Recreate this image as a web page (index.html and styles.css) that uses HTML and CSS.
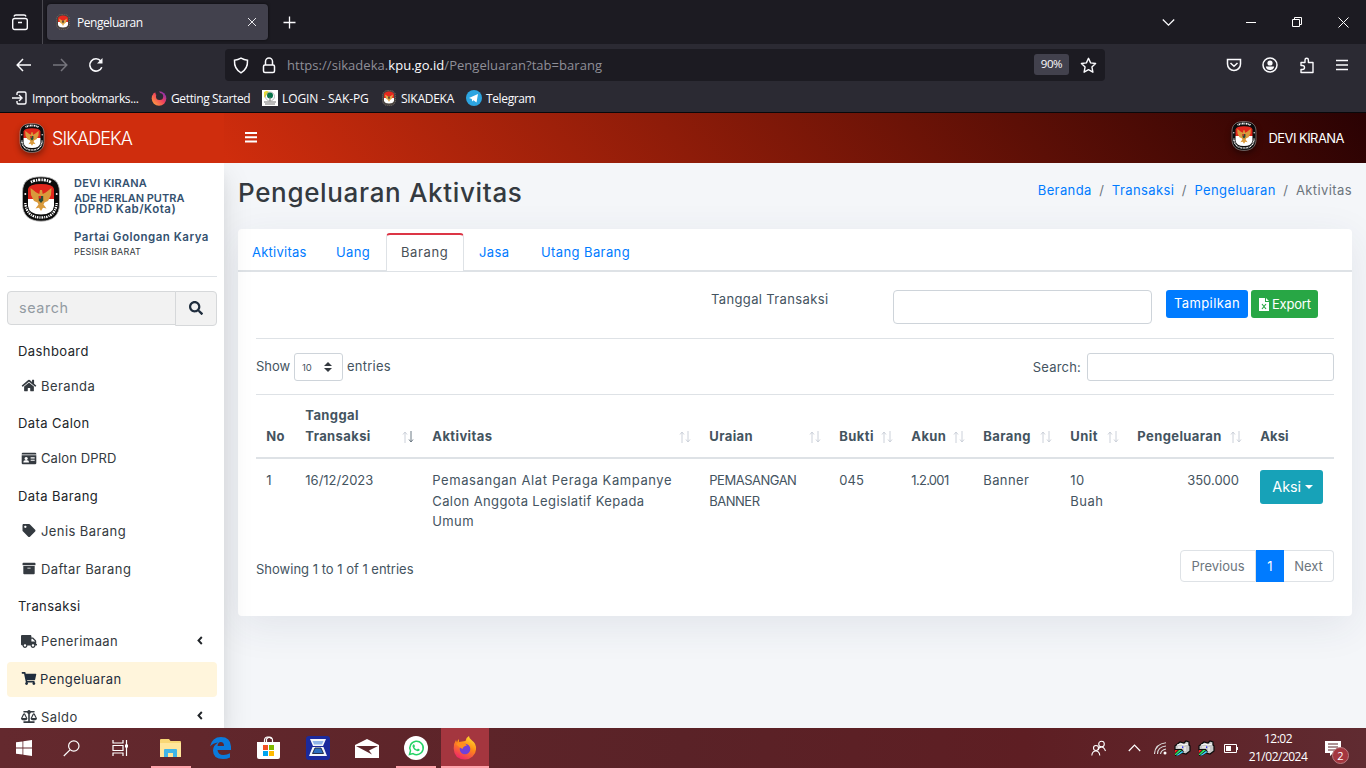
FILE: index.html
```html
<!DOCTYPE html>
<html lang="id">
<head>
<meta charset="utf-8">
<title>Pengeluaran</title>
<link rel="stylesheet" href="styles.css">
</head>
<body>
<svg class="defs" aria-hidden="true">
  <defs>
    <linearGradient id="fox" x1="0.8" y1="0" x2="0.3" y2="1"><stop offset="0" stop-color="#ffe033"/><stop offset=".45" stop-color="#ff8b16"/><stop offset="1" stop-color="#f0246a"/></linearGradient>
    <linearGradient id="swirl" x1="1" y1="0" x2="0" y2="1"><stop offset="0" stop-color="#5b2bd0"/><stop offset=".45" stop-color="#f0405c"/><stop offset="1" stop-color="#ffb03a"/></linearGradient>
  </defs>
  <symbol id="kpu" viewBox="0 0 40 46">
    <path d="M20 .8C32 .8 38.500 5 38.500 16V28C38.500 39 32 45.200 20 45.200S1.500 39 1.500 28V16C1.500 5 8 .8 20 .8z" fill="#0b0b0b" stroke="#bdbdbd" stroke-width=".8"/>
    <path d="M7 23V13Q8 8 20 8T33 13V23Z" fill="#e0261c"/>
    <path d="M7 23H33V30Q32 38.500 20 38.500T7 30Z" fill="#fff"/>
    <path d="M19 14l2 0 .7 4 3-1.500 5.800-4.500-.5 7-3 6-3.500 1.500-1 2 3 4-3.500-.8L20 35l-2-3.300-3.500.8 3-4-1-2-3.500-1.500-3-6-.5-7 5.800 4.500 3 1.500z" fill="#d99a3c"/>
    <path d="M17.800 20h4.400v4.500L20 27l-2.200-2.500z" fill="#2c4b38"/><path d="M17.800 20H20v2.500h-2.200z" fill="#d22"/>
    <path d="M10 6.200Q14 3.800 20 3.800T30 6.200" fill="none" stroke="#fff" stroke-width="2.800" stroke-dasharray="1.300 .9 2.200 1"/>
    <path d="M4.300 27Q5.500 41.500 20 41.500T35.700 27" fill="none" stroke="#fff" stroke-width="2.400" stroke-dasharray="1 .9 1.600 1"/>
    <circle cx="4.300" cy="18" r="1" fill="#fff"/><circle cx="35.700" cy="18" r="1" fill="#fff"/>
  </symbol>
  <symbol id="favicon" viewBox="0 0 14 16">
    <rect x=".3" y=".3" width="13.400" height="15.400" rx="5.500" fill="#4a4440" stroke="#8a8683" stroke-width=".6" stroke-dasharray="1 1"/>
    <path d="M2 8V4q1-2.500 5-2.500T12 4v4z" fill="#e5281e"/><path d="M2 8h10v3q-1 2.500-5 2.500T2 11z" fill="#fff"/>
    <path d="M3 4.500l3 2h2l3-2-1 4-2 1.500-1 2-1-2L4 8.500z" fill="#e0a848"/><path d="M6.300 6.500h1.400v2.300H6.300z" fill="#33302c"/>
  </symbol>
  <symbol id="sort" viewBox="0 0 12 14"><path d="M3 13V2M1 4.500L3 2l2 2.500" fill="none" stroke="#ccd1da"/><path d="M9 1v11M7 9.500L9 12l2-2.500" fill="none" stroke="var(--down,#ccd1da)"/></symbol>
  <symbol id="angle" viewBox="0 0 6 9"><path d="M4.800 1L1.500 4.500 4.800 8" fill="none" stroke="#212529" stroke-width="1.900"/></symbol>
  <symbol id="scanner" viewBox="0 0 17 17"><path d="M1 6l5-4 4 1 2-2 3 1v3l1 1v5l-4 3-8-2-3-2z" fill="#c8c8c8" stroke="#0c0c0c" stroke-width="1.200"/><path d="M3 5l4-1 3 1 4-1M4 7h5M11 7v4" stroke="#fff" fill="none"/><path d="M1 9h7l2 3-6 4H1z" fill="#0c0c0c"/><path d="M1 10h3l-3 3z" fill="#ff2020"/><path d="M5 10h3l-6 5H1v-1z" fill="#30e060"/><path d="M8 11l1.500 1L4 15.500H2z" fill="#40d0ff"/><path d="M8 6.500h1.200v1.200H8z" fill="#00f"/></symbol>
</svg>

<div class="tabstrip">
  <div class="tabview"><svg width="18" height="18" viewBox="0 0 18 18" fill="none" stroke="#fbfbfe" stroke-width="1.400"><rect x="1.700" y="5.500" width="14.600" height="11" rx="2"/><path d="M3 3.500Q3.300 2 5 2h8q1.700 0 2 1.500M7 9.500h4"/></svg></div>
  <div class="tab"><svg width="14" height="16"><use href="#favicon"/></svg><span>Pengeluaran</span><svg width="10" height="10" stroke="#e8e8ec" viewBox="0 0 10 10"><path d="M1 1l8 8M9 1L1 9"/></svg></div>
  <svg class="newtab" width="13" height="13" stroke="#fbfbfe" stroke-width="1.300"><path d="M6.500 .5v12M.5 6.500h12"/></svg>
  <div class="winbtns">
    <svg width="13" height="13" fill="none" stroke="#fbfbfe" stroke-width="1.300"><path d="M.8 3.500l5.700 5.700 5.700-5.700"/></svg>
    <svg width="11" height="11"><path d="M0 5.500h10" stroke="#fff"/></svg>
    <svg width="11" height="11" fill="none" stroke="#fff"><path d="M.5 2.500h7v7h-7zM2.500 2.500v-2h7v7h-2"/></svg>
    <svg width="11" height="11" stroke="#fff"><path d="M.5.5l10 10M10.500.5l-10 10"/></svg>
  </div>
</div>

<div class="toolbar">
  <div class="navbtns">
    <svg width="16" height="14" fill="none" stroke="#fbfbfe" stroke-width="1.500"><path d="M15 7H1.500M7 1L1.200 7 7 13"/></svg>
    <svg width="16" height="14" fill="none" stroke="#76757d" stroke-width="1.500"><path d="M1 7h13.500M9 1l5.800 6L9 13"/></svg>
    <svg width="16" height="16" fill="none" stroke="#fbfbfe" stroke-width="1.600"><path d="M13.800 10.200A6.200 6.200 0 1 1 12.800 4"/><path d="M14.500 1v5.500H9z" fill="#fbfbfe" stroke="none"/></svg>
  </div>
  <div class="urlbar">
    <svg width="16" height="17" fill="none" stroke="#fbfbfe" stroke-width="1.500"><path d="M8 1.200Q11 3 14.500 3.300Q15 12 8 15.800Q1 12 1.500 3.300Q5 3 8 1.200z"/></svg>
    <svg class="lock" width="14" height="17" fill="none" stroke="#fbfbfe" stroke-width="1.500"><rect x="1.500" y="8" width="11" height="7.500" rx="1.500"/><path d="M3.500 8V4.500a3.500 3.500 0 0 1 7 0V8"/></svg>
    <div class="url">https://sikadeka.<b>kpu.go.id</b>/Pengeluaran?tab=barang</div>
    <div class="zoom">90%</div>
    <svg width="17" height="17" fill="none" stroke="#fbfbfe" stroke-width="1.400" stroke-linejoin="round"><path d="M8.500 1.300l2.100 4.600 5 .6-3.700 3.400 1 5.300-4.400-2.600-4.400 2.600 1-5.300L1.400 6.500l5-.6z"/></svg>
  </div>
  <div class="tools">
    <svg width="16" height="16" fill="none" stroke="#fbfbfe" stroke-width="1.500"><path d="M1.500 2.500h13V7a6.500 6.500 0 0 1-13 0zM4.500 6L8 9.200 11.500 6"/></svg>
    <svg width="16" height="16"><circle cx="8" cy="8" r="7" fill="none" stroke="#fbfbfe" stroke-width="1.500"/><circle cx="8" cy="6" r="2.600" fill="#fbfbfe"/><path d="M3.800 9.500h8.400q-.6 3.500-4.200 3.500t-4.200-3.500z" fill="#fbfbfe"/></svg>
    <svg width="16" height="17" fill="none" stroke="#fbfbfe" stroke-width="1.400" stroke-linejoin="round"><path d="M2 5.500h4V3a1.700 1.700 0 0 1 3.400 0v2.500H14V15.500H2V12.500h1.500a2 2 0 0 0 0-4H2z"/></svg>
    <svg width="14" height="12" stroke="#fbfbfe" stroke-width="1.300"><path d="M1 1.500h12M1 6h12M1 10.500h12"/></svg>
  </div>
</div>

<div class="bookmarks">
  <span class="bm b1"><svg width="16" height="14" fill="none" stroke="#fbfbfe" stroke-width="1.400"><path d="M5 4V2.500Q5 1 6.500 1h6Q14 1 14 2.500v9q0 1.500-1.500 1.500h-6Q5 13 5 11.500V10M0 7h9M7 4l3 3-3 3"/></svg>Import bookmarks...</span>
  <span class="bm b2"><svg width="16" height="16"><circle cx="8" cy="8.500" r="7.300" fill="url(#swirl)"/><circle cx="8.600" cy="6.500" r="3.600" fill="#2b2a33"/><path d="M4 1.500Q8-1 9 3L5 5z" fill="#2b2a33"/></svg>Getting Started</span>
  <span class="bm b3"><svg width="16" height="16"><rect width="16" height="16" fill="#fff"/><path d="M2 2q3-2 5 0L2 8z" fill="#e9dc36"/><circle cx="8" cy="6.500" r="4.500" fill="none" stroke="#999" stroke-width=".7"/><circle cx="8" cy="5.500" r="3" fill="#08744a"/><path d="M8 7v4M2 12h12M3 14h10" stroke="#777"/></svg>LOGIN - SAK-PG</span>
  <span class="bm b4"><svg width="14" height="16"><use href="#favicon"/></svg>SIKADEKA</span>
  <span class="bm b5"><svg width="16" height="16"><circle cx="8" cy="8" r="8" fill="#2da5e1"/><path d="M3 8l9-4-1.500 8.500-3-2.200-1.300 1.200-.4-2.500z" fill="#fff"/></svg>Telegram</span>
</div>

<div class="app">
  <header class="header">
    <div class="brand"><svg width="26" height="30"><use href="#kpu"/></svg><span>SIKADEKA</span></div>
    <svg class="bars" width="12" height="11" fill="#fff"><path d="M0 0h12v2H0zM0 4.200h12v2H0zM0 8.500h12v2H0z"/></svg>
    <div class="user"><svg width="26" height="30"><use href="#kpu"/></svg><span>DEVI KIRANA</span></div>
  </header>
  <div class="body">
    <aside class="sidebar">
      <div class="profile">
        <svg width="40" height="46"><use href="#kpu"/></svg>
        <div class="who">
          <b class="n1">DEVI KIRANA</b><b class="n2">ADE HERLAN PUTRA</b><b class="n3">(DPRD Kab/Kota)</b><b class="n4">Partai Golongan Karya</b><span>PESISIR BARAT</span>
        </div>
      </div>
      <div class="find"><div class="find-in">search</div><div class="find-btn"><svg width="14" height="14" viewBox="0 0 512 512"><path d="M505 442.700L405.300 343c-4.500-4.500-10.600-7-17-7H372c27.600-35.300 44-79.700 44-128C416 93.100 322.900 0 208 0S0 93.100 0 208s93.100 208 208 208c48.300 0 92.700-16.400 128-44v16.300c0 6.400 2.500 12.500 7 17l99.700 99.700c9.400 9.400 24.600 9.400 33.900 0l28.300-28.300c9.400-9.400 9.400-24.600.1-34zM208 336c-70.700 0-128-57.200-128-128 0-70.700 57.200-128 128-128 70.700 0 128 57.200 128 128 0 70.700-57.200 128-128 128z"/></svg></div></div>
      <nav class="menu">
        <div class="cap">Dashboard</div>
        <div class="item"><svg viewBox="0 0 576 512"><path d="M280.370 148.260L96 300.110V464a16 16 0 0 0 16 16l112.060-.29a16 16 0 0 0 15.920-16V368a16 16 0 0 1 16-16h64a16 16 0 0 1 16 16v95.640a16 16 0 0 0 16 16.050L464 480a16 16 0 0 0 16-16V300L295.670 148.260a12.190 12.190 0 0 0-15.300 0zM571.600 251.470L488 182.560V44.050a12 12 0 0 0-12-12h-56a12 12 0 0 0-12 12v72.610L318.470 43a48 48 0 0 0-61 0L4.340 251.470a12 12 0 0 0-1.600 16.900l25.500 31A12 12 0 0 0 45.150 301l235.220-193.740a12.190 12.190 0 0 1 15.300 0L530.900 301a12 12 0 0 0 16.900-1.600l25.500-31a12 12 0 0 0-1.700-16.930z"/></svg><span>Beranda</span></div>
        <div class="cap">Data Calon</div>
        <div class="item"><svg viewBox="0 0 576 512"><path fill-rule="evenodd" d="M48 32h480q48 0 48 48v16H0V80q0-48 48-48zM0 128h576v304q0 48-48 48H48q-48 0-48-48zm176 64a64 64 0 1 0 .1 0zM64 400q0 16 16 16h192q16 0 16-16 0-80-70-80h-84q-70 0-70 80zM352 192v32h160v-32zm0 64v32h160v-32zm0 64v32h160v-32z"/></svg><span class="tight">Calon DPRD</span></div>
        <div class="cap">Data Barang</div>
        <div class="item"><svg viewBox="0 0 512 512"><path d="M0 252.118V48C0 21.490 21.490 0 48 0h204.118a48 48 0 0 1 33.941 14.059l211.882 211.882c18.745 18.745 18.745 49.137 0 67.882L293.823 497.941c-18.745 18.745-49.137 18.745-67.882 0L14.059 286.059A48 48 0 0 1 0 252.118zM112 64c-26.510 0-48 21.490-48 48s21.490 48 48 48 48-21.490 48-48-21.490-48-48-48z"/></svg><span>Jenis Barang</span></div>
        <div class="item"><svg viewBox="0 0 512 512"><path d="M32 448c0 17.700 14.300 32 32 32h384c17.700 0 32-14.300 32-32V160H32v288zm160-212c0-6.600 5.400-12 12-12h104c6.600 0 12 5.400 12 12v8c0 6.600-5.400 12-12 12H204c-6.600 0-12-5.400-12-12v-8zM480 32H32C14.300 32 0 46.300 0 64v48c0 8.800 7.200 16 16 16h480c8.800 0 16-7.200 16-16V64c0-17.700-14.300-32-32-32z"/></svg><span>Daftar Barang</span></div>
        <div class="cap">Transaksi</div>
        <div class="item"><svg viewBox="0 0 640 512"><path d="M624 352h-16V243.900c0-12.700-5.100-24.900-14.100-33.900L494 110.100c-9-9-21.200-14.100-33.900-14.100H416V48c0-26.500-21.500-48-48-48H48C21.500 0 0 21.500 0 48v320c0 26.500 21.500 48 48 48h16c0 53 43 96 96 96s96-43 96-96h128c0 53 43 96 96 96s96-43 96-96h48c8.800 0 16-7.200 16-16v-32c0-8.800-7.200-16-16-16zM160 464c-26.500 0-48-21.500-48-48s21.500-48 48-48 48 21.500 48 48-21.500 48-48 48zm320 0c-26.500 0-48-21.500-48-48s21.500-48 48-48 48 21.500 48 48-21.500 48-48 48zm80-208H416V144h44.100l99.900 99.900V256z"/></svg><span>Penerimaan</span><svg class="angle"><use href="#angle"/></svg></div>
        <div class="item active"><svg viewBox="0 0 576 512"><path d="M528.120 301.319l47.273-208C578.806 78.301 567.391 64 551.990 64H159.208l-9.166-44.810C147.758 8.021 137.930 0 126.529 0H24C10.745 0 0 10.745 0 24v16c0 13.255 10.745 24 24 24h69.883l70.248 343.435C147.325 417.100 136 435.222 136 456c0 30.928 25.072 56 56 56s56-25.072 56-56c0-15.674-6.447-29.835-16.824-40h209.647C430.447 426.165 424 440.326 424 456c0 30.928 25.072 56 56 56s56-25.072 56-56c0-22.172-12.888-41.332-31.579-50.405l5.517-24.276c3.413-15.018-8.002-29.319-23.403-29.319H218.117l-6.545-32h293.145c11.206 0 20.920-7.754 23.403-18.681z"/></svg><span>Pengeluaran</span></div>
        <div class="item"><svg viewBox="0 0 640 512"><path d="M256 336h-.02c0-16.180 1.340-8.730-85.050-181.510-17.650-35.290-68.190-35.360-85.870 0C-2.060 328.750.02 320.330.02 336H0c0 44.180 57.310 80 128 80s128-35.820 128-80zM128 176l72 144H56l72-144zm511.980 160c0-16.180 1.340-8.730-85.050-181.510-17.650-35.290-68.190-35.360-85.870 0-87.120 174.260-85.040 165.840-85.040 181.510H384c0 44.180 57.310 80 128 80s128-35.820 128-80h-.02zM440 320l72-144 72 144H440zm88 128H352V153.250c23.510-10.290 41.160-31.480 46.390-57.250H528c8.840 0 16-7.160 16-16V48c0-8.840-7.160-16-16-16H383.640C369.040 12.680 346.090 0 320 0s-49.040 12.680-63.640 32H112c-8.840 0-16 7.160-16 16v32c0 8.840 7.160 16 16 16h129.610c5.230 25.760 22.870 46.960 46.390 57.250V448H112c-8.840 0-16 7.160-16 16v32c0 8.840 7.160 16 16 16h416c8.840 0 16-7.160 16-16v-32c0-8.840-7.160-16-16-16z"/></svg><span>Saldo</span><svg class="angle"><use href="#angle"/></svg></div>
      </nav>
    </aside>
    <main class="main">
      <div class="title">
        <h1>Pengeluaran Aktivitas</h1>
        <div class="crumbs"><a>Beranda</a><i>/</i><a>Transaksi</a><i>/</i><a>Pengeluaran</a><i>/</i><span>Aktivitas</span></div>
      </div>
      <section class="card">
        <div class="tabs"><a class="t1">Aktivitas</a><a class="t2">Uang</a><a class="t3 on">Barang</a><a class="t4">Jasa</a><a class="t5">Utang Barang</a></div>
        <div class="filter">
          <label>Tanggal Transaksi</label><div class="date"></div>
          <div class="btn blue">Tampilkan</div>
          <div class="btn green"><svg width="10" height="13" viewBox="0 0 10 13"><path d="M0 0h6v4h4v9H0zM7 0l3 3H7z" fill="#fff"/><path d="M3 6l4 5M7 6l-4 5" stroke="#28a745" stroke-width="1.200"/></svg><span>Export</span></div>
        </div>
        <div class="controls">
          <span class="show">Show</span><div class="select"><span>10</span><svg width="8" height="10"><path d="M4 0l4 4H0zM4 10L0 6h8z" fill="#343a40"/></svg></div><span class="ent">entries</span>
          <span class="slabel">Search:</span><div class="sinput"></div>
        </div>
        <table>
          <colgroup><col class="c1"><col class="c2"><col class="c3"><col class="c4"><col class="c5"><col class="c6"><col class="c7"><col class="c8"><col class="c9"><col class="c10"></colgroup>
          <thead><tr>
            <th>No</th>
            <th><div class="h sorted"><span>Tanggal<br>Transaksi</span><svg><use href="#sort"/></svg></div></th>
            <th><div class="h"><span>Aktivitas</span><svg><use href="#sort"/></svg></div></th>
            <th><div class="h"><span>Uraian</span><svg><use href="#sort"/></svg></div></th>
            <th><div class="h"><span>Bukti</span><svg><use href="#sort"/></svg></div></th>
            <th><div class="h"><span>Akun</span><svg><use href="#sort"/></svg></div></th>
            <th><div class="h"><span>Barang</span><svg><use href="#sort"/></svg></div></th>
            <th><div class="h"><span>Unit</span><svg><use href="#sort"/></svg></div></th>
            <th><div class="h"><span>Pengeluaran</span><svg><use href="#sort"/></svg></div></th>
            <th class="last">Aksi</th>
          </tr></thead>
          <tbody><tr>
            <td>1</td><td>16/12/2023</td><td class="long"><span>Pemasangan Alat Peraga Kampanye</span><br>Calon Anggota Legislatif Kepada<br>Umum</td><td class="caps">PEMASANGAN<br>BANNER</td><td>045</td><td class="akun">1.2.001</td><td class="long">Banner</td><td class="unit">10<br>Buah</td><td class="num">350.000</td><td class="act"><div class="aksi">Aksi<i></i></div></td>
          </tr></tbody>
        </table>
        <div class="foot"><span>Showing 1 to 1 of 1 entries</span><div class="pager"><div class="prev">Previous</div><div class="cur">1</div><div class="next">Next</div></div></div>
      </section>
    </main>
  </div>
</div>

<footer class="taskbar">
  <div class="task"><svg width="16" height="16" fill="#fff"><path d="M0 2.300l6.500-.9v6.200H0zM7.300 1.300L16 0v7.600H7.300zM0 8.400h6.500v6.200L0 13.700zM7.300 8.400H16V16l-8.700-1.300z"/></svg></div>
  <div class="task early"><svg width="17" height="17" fill="none" stroke="#fff" stroke-width="1.200"><circle cx="10.800" cy="6" r="5.200"/><path d="M7 9.800L.8 16"/></svg></div>
  <div class="task early"><svg width="17" height="16" fill="none" stroke="#fff" stroke-width="1.200"><path d="M1 0v3h10V0M1 5.500h10v5H1zM1 16v-3h10v3M14.500 0v16M1 5v6"/><path d="M13 4.500h3v3h-3z" fill="#fff" stroke="none"/></svg></div>
  <div class="task run"><svg width="22" height="18"><path d="M0 1q0-1 1-1h8l1.500 2H20q1 0 1 1v14H0z" fill="#f8d775"/><path d="M0 4h21v14H0z" fill="#ffe69b"/><path d="M4 18v-7q0-1 1-1h11q1 0 1 1v7h-4v-4H8v4z" fill="#3fb5e8"/></svg></div>
  <div class="task"><svg width="21" height="22"><path d="M0 9.500Q2 0 11 0q9.500 0 10 9.500V13H7.500q.5 5 6 5 3.500 0 6.500-1.800v4.300Q17 22 13 22 3 22 3 13.500q0-5 5-8Q3 6 0 9.500zM7.500 9H14q0-4-3.300-4Q8 5 7.500 9z" fill="#0b7bdc"/></svg></div>
  <div class="task"><svg width="24" height="24"><path d="M0 6h23v15q0 2-2 2H2q-2 0-2-2z" fill="#fff"/><path d="M7.500 7V4a3 3 0 0 1 3-3h2a3 3 0 0 1 3 3v3M9.500 6V3q3-3 5 0" fill="none" stroke="#fff" stroke-width="1.200"/><path d="M6 9h5v5H6z" fill="#f25022"/><path d="M12 9h5v5h-5z" fill="#7fba00"/><path d="M6 15h5v5H6z" fill="#00a4ef"/><path d="M12 15h5v5h-5z" fill="#ffb900"/></svg></div>
  <div class="task"><svg width="24" height="24"><rect width="24" height="24" rx="3" fill="#1b2a9c"/><path d="M4 3h16l-3 7H7zM3 20l3.500-9h11L21 20z" fill="#f4f7fb"/><path d="M6.500 5h11L16 8.500H8z" fill="#8fb4e8"/><path d="M6.500 17.500L9 12h6l2.500 5.500z" fill="#2d6fc0" stroke="#1c2440" stroke-width=".9"/></svg></div>
  <div class="task"><svg width="24" height="19"><path d="M0 6L12 0l12 6v13H0z" fill="#fff"/><path d="M1 7h22l-9 4.500 3 4z" fill="#5d262b"/></svg></div>
  <div class="task run"><svg width="24" height="24"><circle cx="12" cy="12" r="12" fill="#fff"/><path d="M5.500 18.500l1-3.700A6.700 6.700 0 1 1 9 17.600z" fill="none" stroke="#25d366" stroke-width="1.500"/><path d="M9.300 8.500Q10 8 10.500 9l.5 1.300-.7 1q1 1.800 2.700 2.300l1-1 1.700.8q.3 1.800-2 1.800-4-.6-5.200-4.600 0-1.500.8-2.100z" fill="#25d366"/></svg></div>
  <div class="task run lit"><svg width="24" height="24"><path d="M12.500 5Q13 1.500 16 0q-.2 2.500 3 4.500 4.500 3 4 9A11.500 10.500 0 0 1 12 23.500Q1 23 .7 12.500.7 7 3 4l1 2.500Q4.500 4 6 3v3z" fill="url(#fox)"/><circle cx="12" cy="13" r="5.300" fill="#7040d8"/><path d="M3 8q4-3 9-.5l2 2q-4 .5-4.500 3.500-3-1-6.500-5z" fill="#ff8f20"/></svg></div>
  <div class="tray">
    <svg class="ppl" width="15" height="16" fill="none" stroke="#fff" stroke-width="1.100"><circle cx="10.500" cy="4" r="2.800"/><path d="M7 10q1-3 3.500-3t4 4"/><circle cx="5" cy="8" r="2.500"/><path d="M.8 15.500q.5-4.500 4-4.500t4 4.500"/></svg>
    <svg class="up" width="13" height="8" fill="none" stroke="#fff" stroke-width="1.200"><path d="M.8 7l5.700-6 5.700 6"/></svg>
    <svg class="wifi" width="13" height="13" fill="none" stroke="#ddd" stroke-width="1.100"><path d="M.5 12Q1 2 12 .8M3.500 12q0-7 8.500-8M6.500 12q.5-4 5.500-5"/><circle cx="11" cy="11" r="1.500" fill="#fff" stroke="none"/></svg>
    <svg class="s1" width="17" height="17"><use href="#scanner"/></svg><svg class="s2" width="17" height="17"><use href="#scanner"/></svg>
    <svg class="bat" width="15" height="9" fill="none" stroke="#fff"><path d="M.5.5h12v8H.5zM13.500 3v3"/><path d="M2 2h5v5H2z" fill="#fff" stroke="none"/></svg>
    <div class="clock"><span>12:02</span><span>21/02/2024</span></div>
    <div class="notif"><svg width="16" height="15"><path d="M0 0h16v12H8l-3 3v-3H0z" fill="#fff"/><path d="M3 3h10M3 6h10M3 9h7" stroke="#5b2529"/></svg><b>2</b></div>
  </div>
</footer>
</body>
</html>
```
FILE: styles.css
```css
* { box-sizing: border-box; }
body { margin: 0; width: 1366px; height: 768px; overflow: hidden; display: flex; flex-direction: column; font-family: Inter, sans-serif; font-size: 13px; color: #44545f; }
svg { display: block; flex: none; }
.defs { position: absolute; width: 0; height: 0; }

/* Browser chrome */
.tabstrip, .toolbar, .bookmarks { font-family: "Open Sans", sans-serif; color: #fbfbfe; display: flex; align-items: center; }
.tabstrip { height: 44px; background: #1c1b22; flex: none; }
.tabview { width: 43px; height: 44px; border-right: 1px solid #4a4950; padding: 13px 0 0 11px; }
.tab { margin-left: 4px; width: 221px; height: 36px; background: #42414d; border-radius: 4px; display: flex; align-items: center; padding: 0 11px 0 9px; font-size: 12px; letter-spacing: -.45px; box-shadow: 0 0 3px #000a; }
.tab span { flex: 1; padding-left: 7px; }
.newtab { margin-left: 15px; }
.winbtns { margin-left: auto; display: flex; align-items: center; padding-right: 17px; }
.winbtns svg:nth-child(1) { margin-right: 71px; }
.winbtns svg:nth-child(2) { margin-right: 35px; }
.winbtns svg:nth-child(3) { margin-right: 35px; }
.toolbar { height: 42px; background: #2b2a33; flex: none; }
.navbtns { width: 225px; display: flex; align-items: center; gap: 20px; padding-left: 16px; }
.urlbar { width: 880px; height: 32px; border-radius: 4px; background: #1c1b22; display: flex; align-items: center; padding: 0 8px; }
.lock { margin-left: 13px; }
.url { margin-left: 11px; flex: 1; font-size: 13px; color: #8f8f98; letter-spacing: .04px; }
.url b { font-weight: 400; color: #fbfbfe; }
.zoom { width: 35px; height: 21px; line-height: 20px; text-align: center; border-radius: 3px; background: #42414d; font-size: 11.500px; letter-spacing: -.4px; margin: -1px 11px 0 0; }
.tools { margin-left: auto; display: flex; align-items: center; gap: 20.500px; padding-right: 17px; }
.bookmarks { height: 27px; background: #2b2a33; border-bottom: 1px solid #08080b; font-size: 12px; letter-spacing: -.37px; flex: none; padding: 0 0 2px 12px; }
.bm { display: flex; align-items: center; gap: 4px; white-space: nowrap; }
.b1 { width: 139px; } .b2 { width: 111px; } .b3 { width: 120px; letter-spacing: -.1px; } .b4 { width: 84px; letter-spacing: -.28px; gap: 5px; }

/* Application */
.app { height: 615px; flex: none; background: #f4f6f9; overflow: hidden; }
.header { height: 50px; display: flex; align-items: center; background: linear-gradient(50deg, #d02d0d 16%, #2a0203 100%); color: #fff; }
.brand { width: 224px; height: 50px; background: #cf2d0d; display: flex; align-items: center; padding: 0 0 1px 19px; font-size: 18px; font-weight: 300; letter-spacing: -.9px; }
.brand span { margin: 2px 0 0 7px; }
.brand svg, .user svg { filter: drop-shadow(0 3px 3px #0006); }
.bars { margin: -1px 0 0 21px; }
.user { margin-left: auto; display: flex; align-items: center; gap: 11px; padding: 0 22px 4px 0; font-size: 13px; }
.user span { padding-top: 4px; letter-spacing: -.55px; }
.body { display: flex; height: 565px; }
.sidebar { width: 224px; flex: none; padding: 0 7px; background: #fff; position: relative; z-index: 2; box-shadow: 0 14px 28px rgba(0,0,0,.12), 0 10px 10px rgba(0,0,0,.04); clip-path: inset(0 -60px 0 0); letter-spacing: .42px; }
.profile { height: 114px; border-bottom: 1px solid #dee2e6; display: flex; padding: 13px 0 0 14px; gap: 13px; }
.who { display: flex; flex-direction: column; font-size: 11px; color: #34516f; white-space: nowrap; letter-spacing: 0; }
.who b { font-weight: 600; }
.n1 { line-height: 14px; letter-spacing: .2px; } .n2 { line-height: 14px; padding-top: 1px; } .n3 { line-height: 9px; font-size: 11.500px; letter-spacing: .5px; } .n4 { padding-top: 16px; line-height: 14px; font-size: 11.500px; letter-spacing: .5px; }
.who span { font-size: 9px; color: #343a40; line-height: 16px; letter-spacing: .15px; }
.find { display: flex; height: 35px; margin-top: 14px; color: #939ba2; }
.find-in { flex: 1; height: 34px; border: 1px solid #d6d8da; border-radius: 4px 0 0 4px; background: #f2f2f2; font-size: 14.400px; line-height: 32px; padding-left: 11px; letter-spacing: .6px; }
.find-btn { width: 42px; margin-left: -1px; border: 1px solid #d6d8da; border-radius: 0 4px 4px 0; background: #f2f2f2; display: grid; place-items: center; fill: #1f2d3d; padding-bottom: 2px; }
.menu { padding-top: 7.500px; color: #343a40; }
.cap { height: 35px; line-height: 34px; padding-left: 11px; color: #212529; }
.item { height: 35px; margin-bottom: 2.700px; border-radius: 4px; display: flex; align-items: center; padding: 0 13px 1px 14px; fill: #343a40; }
.item > svg:first-child { width: 16px; height: 13px; margin-right: 4px; }
.item span { flex: 1; }
.item .tight { letter-spacing: .1px; }
.item .angle { width: 6px; height: 9px; margin: -2px 1px 0 0; }
.active { background: #fff5dc; color: #1f2d3d; fill: #1f2d3d; }
.active > svg:first-child { margin-right: 3px; }

.main { flex: 1; padding: 0 14px; }
.title { height: 66px; display: flex; justify-content: space-between; padding-top: 12px; }
h1 { margin: 0; font-size: 26px; font-weight: 500; line-height: 36px; color: #343a40; letter-spacing: .66px; }
.crumbs { display: flex; gap: 7.500px; line-height: 30px; color: #6c757d; letter-spacing: .4px; }
.crumbs i { font-style: normal; }
.crumbs a, .tabs a { color: #007bff; }
.card { height: 387px; background: #fff; border-radius: 4px; box-shadow: 0 10px 40px rgba(40,50,90,.09); }
.tabs { height: 43px; border-bottom: 2px solid #dee2e6; display: flex; align-items: flex-end; letter-spacing: .4px; }
.tabs a { height: 37px; padding-left: 14px; line-height: 38px; }
.tabs .t1 { width: 84px; letter-spacing: .25px; } .tabs .t2 { width: 64px; } .tabs .t3 { width: 78px; } .tabs .t4 { width: 62px; padding-left: 15px; } .tabs .t5 { padding-left: 15px; }
.tabs .on { height: 38px; margin-bottom: -1px; border: 1px solid #dee2e6; border-top: 2px solid #dc3545; border-bottom: 0; border-radius: 4px 4px 0 0; background: #fff; color: #495057; line-height: 35px; letter-spacing: .6px; }
.filter { margin: 0 18px; height: 67px; border-bottom: 1px solid #dee2e6; display: flex; padding-top: 18px; }
.filter label { margin-left: 455px; width: 182px; line-height: 18px; letter-spacing: .36px; }
.date { width: 259px; height: 34px; border: 1px solid #ced4da; border-radius: 4px; }
.btn { height: 28px; border-radius: 3px; color: #fff; line-height: 27px; }
.blue { width: 82px; background: #007bff; margin: 0 3px 0 14px; text-align: center; letter-spacing: .4px; }
.green { width: 67px; background: #28a745; display: flex; align-items: center; padding-left: 8px; gap: 3px; letter-spacing: -.2px; }
.controls { margin: 14px 18px 0; height: 41px; display: flex; line-height: 27px; }
.show { width: 38px; }
.select { width: 49px; height: 28px; border: 1px solid #ced4da; border-radius: 3px; display: flex; align-items: center; padding: 0 10px 0 7px; justify-content: space-between; font-size: 9.500px; }
.ent { margin-left: 4px; letter-spacing: .25px; }
.slabel { margin-left: auto; margin-right: 6px; letter-spacing: .2px; line-height: 28px; }
.sinput { width: 247px; height: 28px; border: 1px solid #ced4da; border-radius: 3px; }
table { margin: 0 18px; width: 1078px; table-layout: fixed; border-collapse: separate; border-spacing: 0; line-height: 20.500px; }
.c1 { width: 39px; } .c2 { width: 127px; } .c3 { width: 277px; } .c4 { width: 130px; } .c5 { width: 72px; } .c6 { width: 72px; } .c7 { width: 87px; } .c8 { width: 67px; } .c9 { width: 123px; } .c10 { width: 84px; }
th, td { text-align: left; vertical-align: top; padding: 11px 0 0 10.300px; white-space: nowrap; }
th { vertical-align: bottom; height: 64px; border-top: 1px solid #dee2e6; border-bottom: 2px solid #dee2e6; padding: 10px 0 11px 10.300px; font-weight: 700; letter-spacing: .4px; }
.last { letter-spacing: .1px; }
.h { display: flex; justify-content: space-between; align-items: flex-end; }
.h svg { width: 12px; height: 14px; margin: 0 8px 2px 0; }
.sorted { --down: #6d7a85; }
td { height: 82px; }
.long { letter-spacing: .38px; }
.long span { letter-spacing: .57px; }
.caps { letter-spacing: -.5px; }
.akun { letter-spacing: -.7px; }
.unit { letter-spacing: .5px; }
.num { text-align: right; padding-right: 11px; }
.aksi { width: 63px; height: 34px; border-radius: 3px; background: #17a2b8; color: #fff; font-size: 14.400px; line-height: 34px; display: flex; align-items: center; padding-left: 12px; gap: 4px; letter-spacing: -.1px; }
.aksi i { border: 4px solid transparent; border-top-color: #fff; border-bottom: 0; }
.foot { margin: 9px 18px 0; display: flex; justify-content: space-between; line-height: 38px; }
.pager { display: flex; line-height: 30px; color: #6c757d; text-align: center; }
.pager div { height: 32px; border: 1px solid #dee2e6; }
.pager .prev { width: 76px; border-radius: 4px 0 0 4px; } .pager .cur { width: 28px; background: #007bff; border-color: #007bff; color: #fff; } .pager .next { width: 50px; border-radius: 0 4px 4px 0; border-left: 0; }

/* Desktop taskbar */
.taskbar { height: 40px; flex: none; background: linear-gradient(90deg, #64292e, #5a2227 50%, #5e1e23 75%, #602b31); display: flex; color: #fff; font-family: "Open Sans", sans-serif; }
.task { width: 48px; margin-right: 1px; height: 40px; display: grid; place-items: center; }
.early { padding-right: 3px; }
.run { background: linear-gradient(#ffa3ab, #ffa3ab) center bottom / 40px 2px no-repeat; }
.lit { background: linear-gradient(#ffa3ab, #ffa3ab) center bottom / 48px 2px no-repeat, #a4363f; }
.tray { margin-left: auto; display: flex; align-items: center; width: 275px; }
.up { margin-left: 22px; } .wifi { margin-left: 13px; } .s1 { margin-left: 7px; } .s2 { margin-left: 7px; } .bat { margin-left: 9px; }
.clock { width: 70px; margin-left: 4px; display: flex; flex-direction: column; align-items: center; font-size: 12px; line-height: 18px; letter-spacing: -.5px; }
.notif { position: relative; margin-left: 12px; }
.notif b { position: absolute; left: 7px; top: 6px; width: 17px; height: 17px; border-radius: 50%; background: #a4363f; border: 1px solid #b87b80; font-size: 11px; font-weight: 400; line-height: 15px; text-align: center; }
```
